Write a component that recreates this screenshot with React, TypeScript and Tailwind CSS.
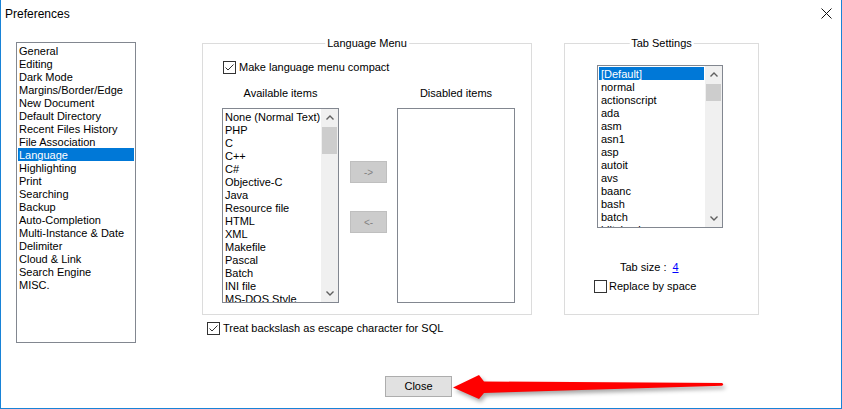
import React from 'react';

const categories = [
    'General', 'Editing', 'Dark Mode', 'Margins/Border/Edge', 'New Document', 'Default Directory',
    'Recent Files History', 'File Association', 'Language', 'Highlighting', 'Print', 'Searching',
    'Backup', 'Auto-Completion', 'Multi-Instance & Date', 'Delimiter', 'Cloud & Link', 'Search Engine', 'MISC.',
];

const available = [
    'None (Normal Text)', 'PHP', 'C', 'C++', 'C#', 'Objective-C', 'Java', 'Resource file', 'HTML',
    'XML', 'Makefile', 'Pascal', 'Batch', 'INI file', 'MS-DOS Style',
];

const tabLangs = [
    '[Default]', 'normal', 'actionscript', 'ada', 'asm', 'asn1', 'asp', 'autoit', 'avs', 'baanc', 'bash', 'batch', 'blitzbasic',
];

function Checkbox({ checked }: { checked: boolean }) {
    return (
        <div className="w-[13px] h-[13px] border border-[#333333] bg-white shrink-0">
            {checked && (
                <svg width="11" height="11" viewBox="0 0 11 11">
                    <polyline points="1.5,5.5 4,8 9.5,2.5" fill="none" stroke="#333" strokeWidth="1" />
                </svg>
            )}
        </div>
    );
}

function ScrollBar({ thumbTop, thumbHeight }: { thumbTop: number; thumbHeight: number }) {
    return (
        <div className="w-[17px] h-full bg-[#f0f0f0] flex flex-col shrink-0">
            <div className="h-[17px] flex items-center justify-center shrink-0">
                <svg width="8" height="5" viewBox="0 0 8 5">
                    <polyline points="0.5,4.5 4,1 7.5,4.5" fill="none" stroke="#606060" strokeWidth="1.4" />
                </svg>
            </div>
            <div className="flex-1 px-[1px]">
                <div className="bg-[#cdcdcd] w-full" style={{ marginTop: thumbTop, height: thumbHeight }} />
            </div>
            <div className="h-[17px] flex items-center justify-center shrink-0">
                <svg width="8" height="5" viewBox="0 0 8 5">
                    <polyline points="0.5,0.5 4,4 7.5,0.5" fill="none" stroke="#606060" strokeWidth="1.4" />
                </svg>
            </div>
        </div>
    );
}

function GroupBox({ title, className, children }: { title: string; className: string; children: React.ReactNode }) {
    return (
        <div className={`relative border border-[#dcdcdc] ${className}`}>
            <span className="absolute -top-[8px] left-1/2 -translate-x-1/2 bg-white px-[2px] leading-[15px] whitespace-nowrap">
                {title}
            </span>
            {children}
        </div>
    );
}

export default function App() {
    return (
        <div
            className="relative w-[842px] h-[409px] bg-white border-l border-r border-b border-[#1883d7] text-[11px] text-black overflow-hidden"
            style={{ fontFamily: '"Liberation Sans", Arial, sans-serif' }}
        >
            {/* title bar */}
            <div className="h-[27px] flex items-center justify-between pl-[4px] pr-[9px]">
                <span className="text-[12px]">Preferences</span>
                <svg width="11" height="11" viewBox="0 0 11 11">
                    <path d="M0.5 0.5 L10.5 10.5 M10.5 0.5 L0.5 10.5" stroke="#111" strokeWidth="1" />
                </svg>
            </div>

            <div className="flex items-start mt-[15px] pl-[15px]">
                {/* categories */}
                <div className="w-[120px] h-[301px] border border-[#828790] pt-[1px] px-[1px]">
                    {categories.map(c => (
                        <div
                            key={c}
                            className={`h-[13px] leading-[14px] pl-[1px] whitespace-nowrap ${c === 'Language' ? 'bg-[#0078d7] text-white' : ''}`}
                        >
                            {c}
                        </div>
                    ))}
                </div>

                {/* language menu */}
                <div className="ml-[66px] mt-[1px]">
                    <GroupBox title="Language Menu" className="w-[330px] h-[272px]">
                        <div className="pt-[17px] pl-[20px] flex items-center gap-[3px] h-[30px] box-border">
                            <Checkbox checked />
                            <span className="leading-[13px]">Make language menu compact</span>
                        </div>
                        <div className="flex pl-[19px] mt-[12px] leading-[14px]">
                            <div className="w-[117px] text-center">Available items</div>
                            <div className="w-[58px]" />
                            <div className="w-[118px] text-center">Disabled items</div>
                        </div>
                        <div className="flex pl-[19px] mt-[8px]">
                            <div className="w-[117px] h-[195px] border border-[#828790] flex overflow-hidden">
                                <div className="flex-1 pt-[1px] pl-[2px] overflow-hidden">
                                    {available.map(a => (
                                        <div key={a} className="h-[13px] leading-[14px] whitespace-nowrap">{a}</div>
                                    ))}
                                </div>
                                <ScrollBar thumbTop={1} thumbHeight={27} />
                            </div>
                            <div className="ml-[11px] w-[37px] flex flex-col">
                                <div className="mt-[53px] h-[22px] bg-[#cccccc] border border-[#bfbfbf] text-[#838383] text-[10px] flex items-center justify-center">-&gt;</div>
                                <div className="mt-[28px] h-[22px] bg-[#cccccc] border border-[#bfbfbf] text-[#838383] text-[10px] flex items-center justify-center">&lt;-</div>
                            </div>
                            <div className="ml-[10px] w-[118px] h-[195px] border border-[#828790]" />
                        </div>
                    </GroupBox>
                    <div className="mt-[7px] pl-[5px] flex items-center gap-[3px]">
                        <Checkbox checked />
                        <span className="leading-[13px]">Treat backslash as escape character for SQL</span>
                    </div>
                </div>

                {/* tab settings */}
                <div className="ml-[32px] mt-[1px]">
                    <GroupBox title="Tab Settings" className="w-[195px] h-[272px]">
                        <div className="pt-[21px] pl-[32px]">
                            <div className="w-[126px] h-[163px] border border-[#828790] flex overflow-hidden">
                                <div className="flex-1 pt-[1px] px-[1px] overflow-hidden">
                                    {tabLangs.map(t => (
                                        <div
                                            key={t}
                                            className={`h-[13px] leading-[14px] pl-[2px] whitespace-nowrap ${t === '[Default]' ? 'bg-[#0078d7] text-white' : ''}`}
                                        >
                                            {t}
                                        </div>
                                    ))}
                                </div>
                                <ScrollBar thumbTop={1} thumbHeight={17} />
                            </div>
                        </div>
                        <div className="mt-[32px] pl-[55px] leading-[14px] flex gap-[6px]">
                            <span>Tab size :</span>
                            <span className="text-[#0000ff] underline">4</span>
                        </div>
                        <div className="mt-[6px] pl-[29px] flex items-center gap-[2px]">
                            <Checkbox checked={false} />
                            <span className="leading-[13px]">Replace by space</span>
                        </div>
                    </GroupBox>
                </div>
            </div>

            {/* close */}
            <div className="mt-[33px] pl-[384px]">
                <div className="w-[67px] h-[21px] bg-[#e1e1e1] border border-[#adadad] flex items-center justify-center">
                    Close
                </div>
            </div>

            {/* annotation arrow */}
            <svg
                className="absolute left-[440px] top-[365px] drop-shadow-[2px_3px_2px_rgba(0,0,0,0.35)]"
                width="300"
                height="44"
                viewBox="440 365 300 44"
            >
                <path
                    d="M452 387.5 L478 375 L483 381.5 L721 383 Q723.5 384.3 721 385.8 L483 393 L478 399 Z"
                    fill="#ff0000"
                />
            </svg>
        </div>
    );
}
